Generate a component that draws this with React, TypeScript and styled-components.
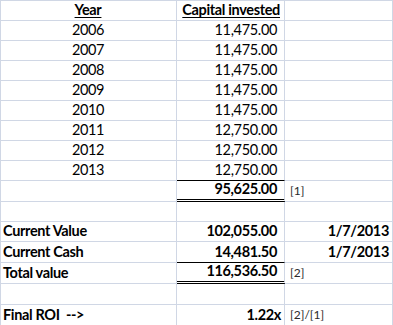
import React from "react";
import styled, { createGlobalStyle, css } from "styled-components";

const GlobalStyle = createGlobalStyle`
  html, body { margin: 0; padding: 0; background: #ffffff; }
  body { font-family: "Lato", "Open Sans", sans-serif; color: #000; }
`;

const GRID = "#d0d7e5";

const Sheet = styled.div`
  display: grid;
  grid-template-columns: 176px 108px 108px;
  grid-template-rows: repeat(9, 20px) 21px 20px 20px 21px 21px 21px 21px;
  width: 393px;
  box-sizing: border-box;
  border-top: 1px solid ${GRID};
  border-left: 1px solid ${GRID};
  background: #fff;
`;

type Align = "left" | "center" | "right";
type Rule = "grid" | "single" | "double";

const Cell = styled.div<{ $align: Align; $bold?: boolean; $rule?: Rule; $pr?: number; $note?: boolean }>`
  box-sizing: border-box;
  display: flex;
  align-items: flex-end;
  justify-content: ${(p) => (p.$align === "left" ? "flex-start" : p.$align === "center" ? "center" : "flex-end")};
  padding: 0 ${(p) => p.$pr ?? 3}px 2px 2px;
  border-right: 1px solid ${GRID};
  border-bottom: 1px solid ${GRID};
  ${(p) => p.$rule === "single" && css`border-bottom: 1px solid #000;`}
  ${(p) => p.$rule === "double" && css`border-bottom: 3px double #000;`}
  font-size: ${(p) => (p.$note ? "12px" : "14.5px")};
  line-height: 16px;
  font-weight: ${(p) => (p.$bold ? 700 : 400)};
  color: ${(p) => (p.$note ? "#2a2a2a" : "#000")};
  letter-spacing: ${(p) => (p.$note ? "0" : "-0.35px")};
  white-space: pre;
  overflow: hidden;
`;

const Head = styled.span`
  font-weight: 700;
  text-decoration: underline;
  text-decoration-thickness: 1px;
  text-underline-offset: 2px;
`;

type Row = {
  c1?: string;
  c1Align?: Align;
  c2?: string;
  c2Pr?: number;
  c3?: string;
  c3Note?: boolean;
  bold?: boolean;
  rule?: Rule;
  header?: boolean;
};

const years: Row[] = [
  ["2006", "11,475.00"],
  ["2007", "11,475.00"],
  ["2008", "11,475.00"],
  ["2009", "11,475.00"],
  ["2010", "11,475.00"],
  ["2011", "12,750.00"],
  ["2012", "12,750.00"],
  ["2013", "12,750.00"],
].map(([y, v], i) => ({ c1: y, c1Align: "center" as Align, c2: v, c2Pr: 7, rule: i === 7 ? ("single" as Rule) : undefined }));

const rows: Row[] = [
  { header: true, c1: "Year", c2: "Capital invested", c2Pr: 4 },
  ...years,
  { c2: "95,625.00", c2Pr: 7, bold: true, rule: "double", c3: "[1]", c3Note: true },
  {},
  { c1: "Current Value", c1Align: "left", c2: "102,055.00", c2Pr: 7, c3: "1/7/2013", bold: true },
  { c1: "Current Cash", c1Align: "left", c2: "14,481.50", c2Pr: 7, c3: "1/7/2013", bold: true, rule: "single" },
  { c1: "Total value", c1Align: "left", c2: "116,536.50", c2Pr: 7, c3: "[2]", c3Note: true, bold: true, rule: "double" },
  {},
  { c1: "Final ROI  -->", c1Align: "left", c2: "1.22x", c2Pr: 3, c3: "[2]/[1]", c3Note: true, bold: true },
];

export default function App() {
  return (
    <>
      <GlobalStyle />
      <Sheet>
        {rows.map((r, i) => (
          <React.Fragment key={i}>
            <Cell $align={r.header ? "center" : r.c1Align ?? "left"} $bold={r.bold}>
              {r.header ? <Head>{r.c1}</Head> : r.c1}
            </Cell>
            <Cell $align="right" $bold={r.bold} $rule={r.rule} $pr={r.c2Pr}>
              {r.header ? <Head>{r.c2}</Head> : r.c2}
            </Cell>
            <Cell $align={r.c3Note ? "left" : "right"} $bold={r.bold && !r.c3Note} $note={r.c3Note} $pr={3}>
              {r.c3Note ? " " + r.c3 : r.c3}
            </Cell>
          </React.Fragment>
        ))}
      </Sheet>
    </>
  );
}
